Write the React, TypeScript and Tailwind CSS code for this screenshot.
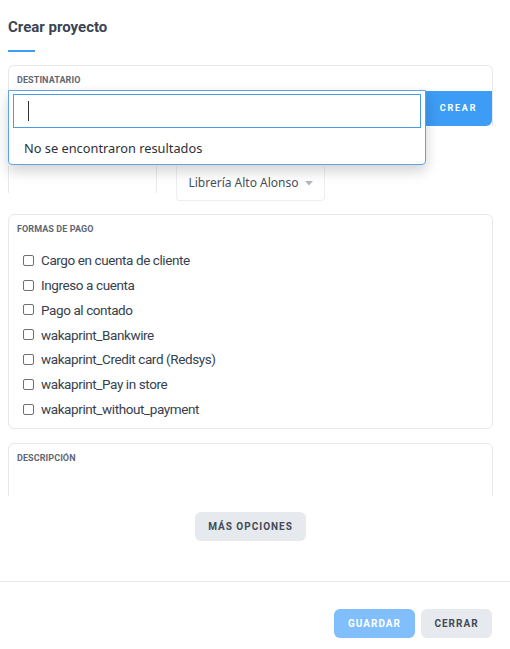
import React from "react";

const PAYMENT_METHODS = [
  "Cargo en cuenta de cliente",
  "Ingreso a cuenta",
  "Pago al contado",
  "wakaprint_Bankwire",
  "wakaprint_Credit card (Redsys)",
  "wakaprint_Pay in store",
  "wakaprint_without_payment",
];

function SectionLabel({ children }: { children: React.ReactNode }) {
  return (
    <div className="text-[9px] leading-[12px] font-bold uppercase text-[#5f6772] tracking-[0.01em]">
      {children}
    </div>
  );
}

export default function App() {
  return (
    <div className="relative w-[510px] h-[649px] bg-white overflow-hidden font-['Roboto',sans-serif] text-[#36404c]">
      {/* Header */}
      <div className="pl-2 pt-[17px]">
        <h1 className="text-[15px] leading-[20px] font-bold text-[#3a4452]">Crear proyecto</h1>
        <div className="mt-[13px] w-[27px] h-[2px] bg-[#3d9cf5]" />
      </div>

      {/* Body */}
      <div className="relative h-[436px] mt-[8px] overflow-hidden pl-2 pr-[17px] pt-[5px]">
        {/* Destinatario */}
        <div className="border-x border-t border-[#e6e8eb] rounded-t-md pt-2">
          <div className="pl-2">
            <SectionLabel>Destinatario</SectionLabel>
          </div>
          <div className="flex h-[35px] mt-[5px]">
            <div className="flex-1" />
            <button className="w-[67px] bg-[#3d9cf5] rounded-br-md text-white text-[9px] font-bold tracking-[0.2em]">
              CREAR
            </button>
          </div>
        </div>

        <div className="flex items-start mt-[40px] h-[35px]">
          <div className="w-[149px] h-[27px] border-x border-[#e8e9ec]" />
          <div className="ml-[19px] w-[149px] h-[35px] border-x border-b border-[#eceef0] rounded-b flex items-center justify-center gap-[6px] text-[12px] text-[#454f5b] font-['Noto_Sans',sans-serif]">
            <span>Librería Alto Alonso</span>
            <svg width="8" height="5" viewBox="0 0 8 5">
              <path d="M0 0h8L4 4.5z" fill="#b3b7bd" />
            </svg>
          </div>
        </div>

        {/* Formas de pago */}
        <div className="mt-[13px] border border-[#e6e8eb] rounded-md px-2 pt-2 pb-[6px]">
          <SectionLabel>Formas de pago</SectionLabel>
          <ul className="mt-[13px] pl-[6px] flex flex-col">
            {PAYMENT_METHODS.map((m) => (
              <li key={m} className="flex items-center h-[24.8px] gap-[7px]">
                <span className="w-[11px] h-[11px] border border-[#6b7179] rounded-[2px] bg-white" />
                <span className="text-[13.5px] text-[#37414d] tracking-[-0.03em]">{m}</span>
              </li>
            ))}
          </ul>
        </div>

        {/* Descripcion */}
        <div className="mt-[14px] border border-[#e6e8eb] rounded-md px-2 pt-2 h-[120px]">
          <SectionLabel>Descripción</SectionLabel>
        </div>

        {/* Dropdown popup */}
        <div className="absolute left-2 top-[30px] w-[418px] h-[75px] bg-white border border-[#5ea3e8] rounded-b shadow-[0_6px_14px_rgba(0,0,0,0.18)] px-1 pt-[3px]">
          <div className="h-[34px] border border-[#4b9ae6] flex items-center pl-[14px]">
            <div className="w-px h-[20px] bg-[#333]" />
          </div>
          <div className="pl-[11px] pt-[10px] text-[12.8px] leading-[20px] text-[#2d3136] font-['Noto_Sans',sans-serif]">
            No se encontraron resultados
          </div>
        </div>
      </div>

      {/* Más opciones */}
      <div className="pl-2 pr-[17px] flex justify-center mt-[16px]">
        <button className="w-[111px] h-[29px] bg-[#e6e9ed] rounded-md text-[10px] font-bold tracking-[0.1em] text-[#434b55]">
          MÁS OPCIONES
        </button>
      </div>

      <div className="mt-[40px] border-t border-[#e5e7ea]" />

      {/* Footer */}
      <div className="flex justify-end gap-[6px] pr-[18px] mt-[27px]">
        <button className="w-[81px] h-[29px] bg-[#80bffc] rounded-md text-[10px] font-bold tracking-[0.1em] text-white">
          GUARDAR
        </button>
        <button className="w-[71px] h-[29px] bg-[#e6e9ed] rounded-md text-[10px] font-bold tracking-[0.1em] text-[#434b55]">
          CERRAR
        </button>
      </div>
    </div>
  );
}
